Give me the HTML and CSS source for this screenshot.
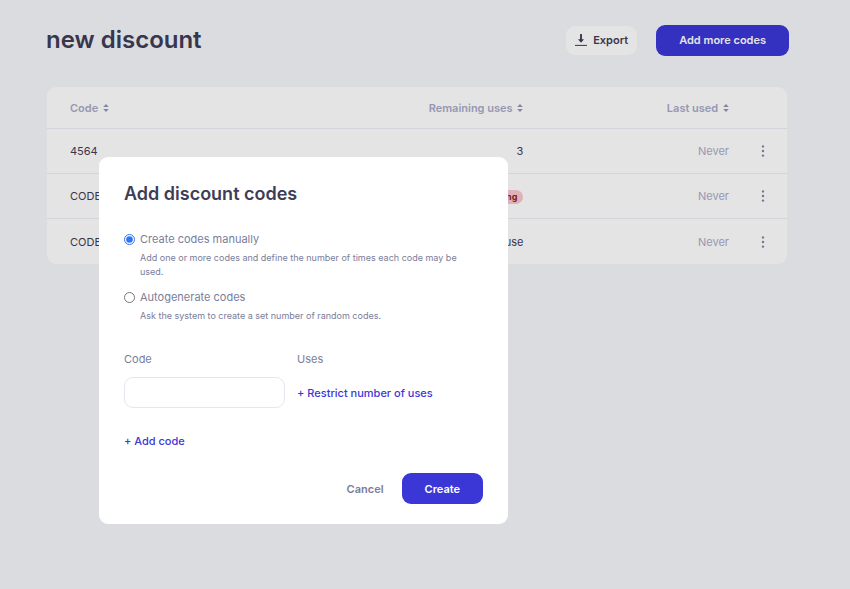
FILE: index.html
```html
<!DOCTYPE html>
<html lang="en">
<head>
<meta charset="UTF-8">
<meta name="viewport" content="width=device-width, initial-scale=1.0">
<title>new discount</title>
<link rel="stylesheet" href="styles.css">
</head>
<body>

<main class="page">
  <header class="page-header">
    <h1>new discount</h1>
    <div class="page-actions">
      <button type="button" class="button button-export">
        <svg class="icon-export" viewBox="0 0 12 12" aria-hidden="true">
          <path d="M6 0.8v6" stroke="currentColor" stroke-width="1.9" stroke-linecap="round"/>
          <path d="M3 5.2h6L6 8.8z" fill="currentColor"/>
          <path d="M0 11.4h12" stroke="currentColor" stroke-width="1"/>
        </svg>
        Export
      </button>
      <button type="button" class="button button-primary">Add more codes</button>
    </div>
  </header>

  <table class="codes">
    <thead>
      <tr>
        <th class="col-code">Code <svg class="icon-sort" viewBox="0 0 6 8" aria-hidden="true"><path d="M3 0l2.8 3H.2zM3 8L.2 5h5.6z"/></svg></th>
        <th class="col-uses">Remaining uses <svg class="icon-sort" viewBox="0 0 6 8" aria-hidden="true"><path d="M3 0l2.8 3H.2zM3 8L.2 5h5.6z"/></svg></th>
        <th class="col-last">Last used <svg class="icon-sort" viewBox="0 0 6 8" aria-hidden="true"><path d="M3 0l2.8 3H.2zM3 8L.2 5h5.6z"/></svg></th>
        <th class="col-menu"></th>
      </tr>
    </thead>
    <tbody>
      <tr>
        <td class="col-code">4564</td>
        <td class="col-uses">3</td>
        <td class="col-last">Never</td>
        <td class="col-menu"><button type="button" class="menu-button" aria-label="Options"><svg class="icon-dots" viewBox="0 0 4 12"><circle cx="2" cy="1.4" r="1.2"/><circle cx="2" cy="6" r="1.2"/><circle cx="2" cy="10.6" r="1.2"/></svg></button></td>
      </tr>
      <tr>
        <td class="col-code">CODE1</td>
        <td class="col-uses"><span class="badge">0 remaining</span></td>
        <td class="col-last">Never</td>
        <td class="col-menu"><button type="button" class="menu-button" aria-label="Options"><svg class="icon-dots" viewBox="0 0 4 12"><circle cx="2" cy="1.4" r="1.2"/><circle cx="2" cy="6" r="1.2"/><circle cx="2" cy="10.6" r="1.2"/></svg></button></td>
      </tr>
      <tr>
        <td class="col-code">CODE2</td>
        <td class="col-uses">Unlimited use</td>
        <td class="col-last">Never</td>
        <td class="col-menu"><button type="button" class="menu-button" aria-label="Options"><svg class="icon-dots" viewBox="0 0 4 12"><circle cx="2" cy="1.4" r="1.2"/><circle cx="2" cy="6" r="1.2"/><circle cx="2" cy="10.6" r="1.2"/></svg></button></td>
      </tr>
    </tbody>
  </table>
</main>

<div class="overlay">
  <form class="modal" role="dialog" aria-labelledby="modal-title">
    <h2 id="modal-title">Add discount codes</h2>

    <div class="options">
      <div class="option">
        <input type="radio" name="mode" id="mode-manual" checked>
        <label for="mode-manual">Create codes manually</label>
        <p>Add one or more codes and define the number of times each code may be used.</p>
      </div>
      <div class="option">
        <input type="radio" name="mode" id="mode-auto">
        <label for="mode-auto">Autogenerate codes</label>
        <p>Ask the system to create a set number of random codes.</p>
      </div>
    </div>

    <div class="fields">
      <label for="code-field">Code</label>
      <span>Uses</span>
      <input type="text" id="code-field" autocomplete="off">
      <button type="button" class="link-button">+ Restrict number of uses</button>
    </div>

    <button type="button" class="link-button">+ Add code</button>

    <div class="modal-actions">
      <button type="button" class="cancel-button">Cancel</button>
      <button type="submit" class="button button-primary">Create</button>
    </div>
  </form>
</div>

</body>
</html>
```
FILE: styles.css
```css
* {
  box-sizing: border-box;
}
body {
  margin: 0;
  font-family: Inter, "Liberation Sans", sans-serif;
  font-size: 11px;
  line-height: 14px;
  color: #3f3d56;
  background-color: #f5f6fa;
}
h1, h2, p {
  margin: 0;
}
button, input {
  font: inherit;
  margin: 0;
}
button {
  padding: 0;
  border: none;
  background: none;
  color: inherit;
  cursor: pointer;
}
.page {
  padding: 24px 61px 24px 46px;
}
.page-header {
  display: flex;
  justify-content: space-between;
  align-items: center;
  margin-bottom: 31px;
}
h1 {
  font-size: 24px;
  line-height: 32px;
  font-weight: 600;
}
.page-actions {
  display: flex;
  align-items: center;
  gap: 19px;
}
.button {
  height: 31px;
  padding: 0 23px;
  border-radius: 9px;
  font-weight: 600;
}
.button-primary {
  background-color: #3b37d7;
  color: #fff;
}
.button-export {
  display: flex;
  align-items: center;
  gap: 6px;
  height: 29px;
  padding: 0 9px;
  background-color: #fff;
}
.icon-export {
  width: 12px;
  height: 12px;
  fill: none;
}

/* Codes table */
.codes {
  width: calc(100% - 3px);
  margin-left: 1px;
  table-layout: fixed;
  border-collapse: separate;
  border-spacing: 0;
  background-color: #fff;
  border-radius: 9px;
}
.codes th {
  height: 41px;
  padding: 0 12px;
  font-weight: 600;
  color: #a9abc6;
}
.codes td {
  height: 45px;
  padding: 0 12px;
  border-top: 1px solid #ecedf5;
}
.codes tr:last-child td {
  height: 46px;
}
.codes .col-code {
  width: 33%;
  padding-left: 23px;
  text-align: left;
}
.codes .col-uses {
  width: 33%;
  text-align: right;
}
.codes .col-last {
  text-align: right;
  color: #a9abc6;
}
.codes .col-menu {
  width: 46px;
  text-align: left;
  padding: 0 0 0 14px;
}
.icon-sort {
  width: 6px;
  height: 8px;
  margin-left: 2px;
  fill: #9496b4;
}
.badge {
  display: inline-block;
  padding: 0 6px;
  border-radius: 7px;
  font-size: 9px;
  font-weight: 700;
  color: #8a1c30;
  background-color: #fbc8ce;
}
.menu-button {
  display: flex;
  justify-content: center;
  width: 16px;
}
.icon-dots {
  width: 4px;
  height: 12px;
  fill: #8385a5;
}

/* Dialog */
.overlay {
  position: fixed;
  inset: 0;
  padding: 157px 99px 0;
  background-color: rgba(0, 0, 0, 0.105);
}
.modal {
  max-width: 409px;
  padding: 25px 25px 20px;
  border-radius: 9px;
  background-color: #fff;
  color: #7b7d99;
}
h2 {
  margin-bottom: 26px;
  font-size: 18px;
  line-height: 24px;
  font-weight: 600;
  color: #3f3d56;
}
.options {
  display: grid;
  gap: 11px;
  margin-bottom: 29px;
}
.option {
  display: grid;
  grid-template-columns: 11px 1fr;
  gap: 5px;
  align-items: center;
}
.option input {
  width: 11px;
  height: 11px;
  margin: 0;
  accent-color: #2f74f5;
}
.option p {
  grid-column: 2;
  padding-right: 12px;
  font-size: 9px;
}
.fields {
  display: grid;
  grid-template-columns: 161px 1fr;
  gap: 11px 12px;
  align-items: center;
  margin-bottom: 26px;
}
.fields input {
  width: 100%;
  height: 31px;
  padding: 0 9px;
  border: 1px solid #e6e6f0;
  border-radius: 9px;
}
.link-button {
  justify-self: start;
  font-weight: 500;
  color: #3b37d7;
}
.modal-actions {
  display: flex;
  justify-content: flex-end;
  align-items: center;
  gap: 18px;
  margin-top: 25px;
}
.cancel-button {
  font-weight: 600;
}
```
